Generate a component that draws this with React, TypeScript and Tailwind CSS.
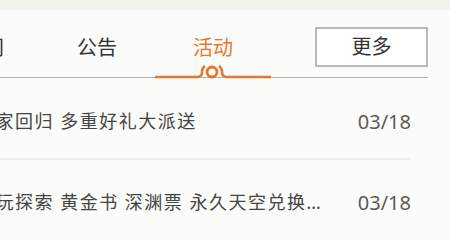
import React from 'react';

const tabs = [
    { label: '新闻', active: false, w: 'w-[110px]' },
    { label: '公告', active: false, w: 'w-[116px]' },
    { label: '活动', active: true, w: 'w-[116px]' },
];

const news = [
    { title: '玩家回归 多重好礼大派送', date: '03/18' },
    { title: '畅玩探索 黄金书 深渊票 永久天空兑换券等你来拿', date: '03/18' },
];

const ActiveMark: React.FC = () => (
    <svg className="absolute left-0 bottom-[-2px]" width="116" height="18" viewBox="0 0 116 18" fill="none">
        <path d="M0 16 H42 Q47 16 47 11 Q47 7 50 5" stroke="#e3782c" strokeWidth="2.5" />
        <path d="M116 16 H72 Q67 16 67 11 Q67 7 64 5" stroke="#e3782c" strokeWidth="2.5" />
        <circle cx="57" cy="11" r="5" stroke="#e3782c" strokeWidth="2.8" />
    </svg>
);

const App: React.FC = () => {
    return (
        <div
            className="w-[450px] h-[240px] overflow-hidden bg-[#fbfbf9]"
            style={{ fontFamily: '"Noto Sans", "Noto Sans CJK SC", sans-serif' }}
        >
            <div className="h-[10px] bg-[#f2f1ec]" />
            <div className="ml-[-71px] w-[499px]">
                <div className="flex items-end h-[68px] border-b border-[#b4b4b4]">
                    {tabs.map((tab) => (
                        <div
                            key={tab.label}
                            className={`relative ${tab.w} h-full flex items-center justify-center pt-[9px] text-[20px] ${
                                tab.active ? 'text-[#e3782c]' : 'text-[#333]'
                            }`}
                        >
                            {tab.label}
                            {tab.active && <ActiveMark />}
                        </div>
                    ))}
                    <div className="flex-1 h-full flex items-start justify-end pt-[17px]">
                        <button className="w-[113px] h-[40px] border-2 border-[#b9b9b9] bg-white text-[20px] text-[#333] leading-none">
                            更多
                        </button>
                    </div>
                </div>
                <div className="pl-[47px] pr-[17px] pt-[2px]">
                    {news.map((item, i) => (
                        <div
                            key={i}
                            className={`flex items-center h-[80px] pt-[5px] ${i === 0 ? 'border-b-2 border-[#f0efeb]' : ''}`}
                        >
                            <div className="flex-1 min-w-0 truncate text-[18px] tracking-[1.5px] text-[#444]">
                                {item.title}
                            </div>
                            <div className="w-[84px] text-right text-[20px] text-[#5a5a5a]">{item.date}</div>
                        </div>
                    ))}
                </div>
            </div>
        </div>
    );
};

export default App;
